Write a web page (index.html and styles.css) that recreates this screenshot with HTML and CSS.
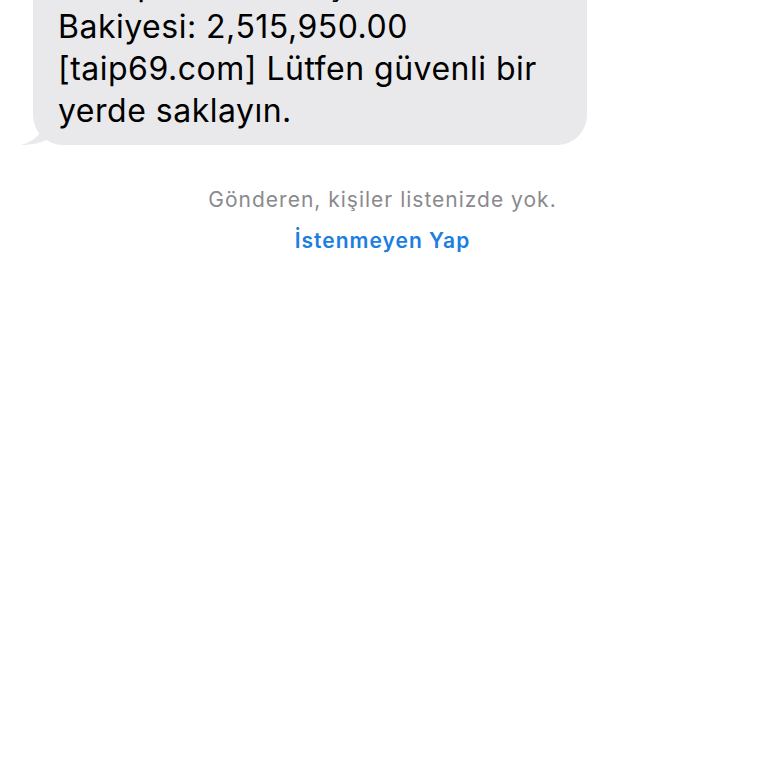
FILE: index.html
```html
<!DOCTYPE html>
<html lang="tr">
<head>
<meta charset="utf-8">
<link rel="stylesheet" href="styles.css">
</head>
<body>
<main class="thread">
  <div class="msg-row">
    <div class="bubble">
      <p class="text">Hesap Kontrol başarılı. Kalan<br>Bakiyesi: 2,515,950.00<br>[taip69.com] Lütfen güvenli bir<br>yerde saklayın.</p>
      <svg class="tail" width="30" height="24" viewBox="0 0 30 24" aria-hidden="true">
        <path d="M22 0 C22 10 17 19 0 24 C10 24 20 22 30 17 L30 0 Z" fill="#e9e9eb"/>
      </svg>
    </div>
  </div>
  <div class="notice">
    <p class="notice-text">Gönderen, kişiler listenizde yok.</p>
    <a class="notice-link" href="#">İstenmeyen Yap</a>
  </div>
</main>
</body>
</html>
```
FILE: styles.css
```css
html, body {
  margin: 0;
  padding: 0;
  background: #ffffff;
}
body {
  width: 768px;
  height: 768px;
  overflow: hidden;
  font-family: Inter, "Noto Sans", "Liberation Sans", sans-serif;
}
.thread {
  display: flex;
  flex-direction: column;
}
.msg-row {
  display: flex;
  padding-left: 33px;
  margin-top: -36px;
}
.bubble {
  position: relative;
  width: 554px;
  box-sizing: border-box;
  background: #e9e9eb;
  border-radius: 0 0 30px 30px;
  padding: 0 16px 13px 25px;
}
.text {
  margin: 0;
  font-size: 32px;
  line-height: 42px;
  color: #000000;
  letter-spacing: 0.5px;
}
.tail {
  position: absolute;
  left: -12px;
  bottom: 0;
}
.notice {
  display: flex;
  flex-direction: column;
  align-items: center;
  padding-top: 42px;
  padding-right: 3px;
}
.notice-text {
  margin: 0;
  font-size: 21px;
  line-height: 26px;
  letter-spacing: 1px;
  color: #8a8a8e;
}
.notice-link {
  margin-top: 15px;
  font-size: 21px;
  line-height: 26px;
  letter-spacing: 1px;
  font-weight: 600;
  color: #1b7ee0;
  text-decoration: none;
}
```
